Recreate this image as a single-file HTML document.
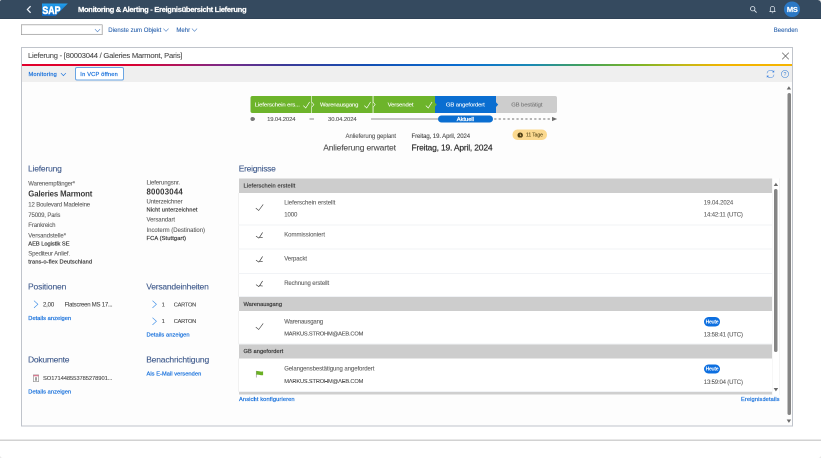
<!DOCTYPE html>
<html lang="de">
<head>
<meta charset="utf-8">
<title>Monitoring &amp; Alerting - Ereignisübersicht Lieferung</title>
<style>
*{box-sizing:border-box;margin:0;padding:0}
h1,h2,h3{font-weight:normal;font-size:inherit}
html,body{width:821px;height:458px;overflow:hidden;background:#e9e9e9}
#vp{position:absolute;left:0;top:0;width:1642px;height:916px;transform:scale(0.5);transform-origin:0 0;will-change:transform;overflow:hidden}
#stage{position:relative;zoom:2;width:821px;height:458px;overflow:hidden;background:#fff;border-radius:1.5px 3px 3px 3px;font-family:"Liberation Sans",sans-serif;color:#333;font-size:6px;line-height:10px}
.abs,.t{position:absolute;white-space:nowrap;display:block}
.t{line-height:10px;height:10px;-webkit-text-stroke:0.1px currentColor}
.t.b{-webkit-text-stroke:0}
.t.hb{-webkit-text-stroke:0.2px #fff}
.t.m{-webkit-text-stroke:0.3px currentColor}
.t.m2{-webkit-text-stroke:0.18px currentColor}
.t.sb{-webkit-text-stroke:0.2px currentColor}
header{position:absolute;left:0;top:0;width:821px;height:19px;background:#354a5f;border-radius:1.5px 3px 0 0;border-bottom:0.7px solid #2b3d4f}
.avatar{left:784.1px;top:1.5px;width:15.8px;height:15.7px;border-radius:50%;background:#2b78c5}
.combo{left:21.1px;top:24.3px;width:81.4px;height:10.8px;border:0.9px solid #8c8c8c;background:#fff;box-shadow:inset 0 0 0 0.6px #e2e2e2}
main{position:absolute;left:21px;top:47px;width:772.2px;height:379.6px;border:1px solid #c0c4cb;background:#fdfdfd}
.ptitle{left:0;top:0;width:770.2px;height:17px;background:#fff}
.cbar{left:0;top:15.9px;width:770.2px;height:2.1px;background:linear-gradient(90deg,#e2002b 0%,#dc0030 14%,#b4145a 20%,#7c2a88 26%,#3c3a98 34%,#1450b4 45%,#0a6ed1 57%,#1b8ab5 66%,#45a25a 73%,#7cb428 80%,#c4b818 86%,#f2b400 91%,#f6b400 100%)}
.ptool{left:0;top:18px;width:770.2px;height:16.2px;background:#efefef}
.btn{left:75px;top:67.1px;width:48.9px;height:13.6px;border:1px solid #6aa5e3;border-radius:2px;background:#fff}
.seg{top:96px;height:17.2px}
.gh{left:239.2px;width:532.7px;background:#cdcdcd}
.row{left:238.7px;width:533.2px;background:#fff;border-left:0.8px solid #e6e6e6;border-bottom:1.2px solid #f1f3f6}
.heute{width:16px;height:9.3px;border-radius:4.65px;background:#0d6fe0}
footer{position:absolute;left:0;top:439.3px;width:821px;height:18.7px;background:#fff;border-top:1.6px solid #d2d2d2;border-radius:0 0 3px 3px}
</style>
</head>
<body>
<div id="vp"><div id="stage">
<header>
  <svg class="abs" style="left:25px;top:5px" width="8" height="9" viewBox="0 0 8 9"><path d="M5.6 1.2 L2.4 4.5 L5.6 7.8" fill="none" stroke="#eef3fa" stroke-width="1.25"/></svg>
  <svg class="abs" style="left:42.1px;top:3.4px" width="27" height="12.8" viewBox="0 0 27 12.8"><defs><linearGradient id="sapg" x1="0" y1="0" x2="0" y2="1"><stop offset="0" stop-color="#22a0ee"/><stop offset="1" stop-color="#0d63bf"/></linearGradient></defs><path d="M0 0H25.8L13.2 12.8H0Z" fill="url(#sapg)"/><text x="0.4" y="10.6" font-family="Liberation Sans, sans-serif" font-weight="bold" font-size="11.2" fill="#fff" stroke="#fff" stroke-width="0.55" textLength="18.2" lengthAdjust="spacingAndGlyphs">SAP</text></svg>
  <h1><span class="t hb b" style="left:78.00px;top:4.63px;font-size:7.6px;letter-spacing:-0.326px;color:#fff;font-weight:bold">Monitoring &amp; Alerting - Ereignisübersicht Lieferung</span></h1>
  <svg class="abs" style="left:749px;top:5px" width="9" height="9" viewBox="0 0 9 9"><circle cx="3.7" cy="3.7" r="2.2" fill="none" stroke="#e8eef5" stroke-width="0.8"/><path d="M5.4 5.4 L7.6 7.6" stroke="#e8eef5" stroke-width="0.9"/></svg>
  <svg class="abs" style="left:768px;top:5px" width="9" height="9" viewBox="0 0 9 9"><path d="M2.3 6.4 V3.8 A2.2 2.4 0 0 1 6.7 3.8 V6.4 M1.4 6.6 H7.6 M3.8 7.8 H5.2" fill="none" stroke="#e8eef5" stroke-width="0.7"/></svg>
  <span class="abs avatar"></span><span class="t hb b" style="left:786.90px;top:4.63px;font-size:7.5px;letter-spacing:-0.325px;color:#fff;font-weight:bold">MS</span>
</header>

<nav>
  <span class="abs combo"></span>
  <svg class="abs" style="left:94.6px;top:27.9px" width="6" height="5" viewBox="0 0 6 5"><path d="M0.4 1.1 L3 3.8 L5.6 1.1" fill="none" stroke="#4a7fc4" stroke-width="0.55"/></svg><span class="t" style="left:108.30px;top:24.97px;font-size:6px;letter-spacing:0.036px;color:#2a62ad">Dienste zum Objekt</span><svg class="abs" style="left:163.1px;top:27.7px" width="6" height="5" viewBox="0 0 6 5"><path d="M0.4 1.1 L3 3.8 L5.6 1.1" fill="none" stroke="#4a7fc4" stroke-width="0.55"/></svg><span class="t" style="left:176.40px;top:24.97px;font-size:6px;letter-spacing:0.007px;color:#2a62ad">Mehr</span><svg class="abs" style="left:191.7px;top:27.7px" width="6" height="5" viewBox="0 0 6 5"><path d="M0.4 1.1 L3 3.8 L5.6 1.1" fill="none" stroke="#4a7fc4" stroke-width="0.55"/></svg><span class="t" style="left:773.80px;top:24.97px;font-size:6px;letter-spacing:0.011px;color:#2a62ad">Beenden</span>
</nav>

<main>
  <span class="abs ptitle"></span>
  <span class="abs cbar"></span>
  <span class="abs ptool"></span>
</main>

<section>
  <h2><span class="t" style="left:28.00px;top:50.63px;font-size:7.6px;letter-spacing:-0.217px;color:#4d4d4d">Lieferung - [80003044 / Galeries Marmont, Paris]</span></h2>
  <svg class="abs" style="left:781px;top:51.6px" width="9" height="9" viewBox="0 0 9 9"><path d="M1.2 1.2 L7.8 7.8 M7.8 1.2 L1.2 7.8" stroke="#444" stroke-width="0.65" fill="none"/></svg>
  <span class="t sb" style="left:28.50px;top:69.02px;font-size:5.7px;letter-spacing:0.191px;color:#1670dc">Monitoring</span><svg class="abs" style="left:60.6px;top:71.9px" width="5.8" height="4.8" viewBox="0 0 6 5"><path d="M0.4 1.1 L3 3.8 L5.6 1.1" fill="none" stroke="#1670dc" stroke-width="0.65"/></svg>
  <span class="abs btn"></span><span class="t sb" style="left:80.30px;top:69.02px;font-size:5.7px;letter-spacing:0.188px;color:#1670dc">In VCP öffnen</span>
  <svg class="abs" style="left:765.5px;top:69px" width="10" height="10" viewBox="0 0 10 10"><path d="M1.5 4.4 A3.6 3.6 0 0 1 8 2.8 M8.5 5.6 A3.6 3.6 0 0 1 2 7.2" fill="none" stroke="#4a8be0" stroke-width="0.55"/><path d="M8.7 1.2 L8.7 3.5 L6.6 3.2 Z M1.3 8.8 L1.3 6.5 L3.4 6.8 Z" fill="#3b82e0"/></svg>
  <svg class="abs" style="left:780.5px;top:69.5px" width="9" height="9" viewBox="0 0 9 9"><circle cx="4.5" cy="4.5" r="3.6" fill="none" stroke="#3b82d6" stroke-width="0.55"/><text x="4.5" y="6.4" text-anchor="middle" font-family="Liberation Sans, sans-serif" font-size="5.2" fill="#3b82d6">?</text></svg>
</section>

<section>
  <span class="abs seg" style="left:250.7px;width:61px;background:#6db42b;border-radius:2px 0 0 2px"></span>
  <span class="abs seg" style="left:312px;width:61px;background:#6db42b"></span>
  <span class="abs seg" style="left:373.3px;width:61.5px;background:#6db42b"></span>
  <span class="abs seg" style="left:434.8px;width:61.4px;background:#0a6ed1"></span>
  <span class="abs seg" style="left:496.2px;width:61px;background:#cdcdcd;border-radius:0 2px 2px 0"></span>
  <svg class="abs" style="left:310px;top:96px" width="190" height="17.2" viewBox="0 0 190 17.2">
    <path d="M1.6 0 V17.2" stroke="#e4f2d6" stroke-width="0.7" fill="none"/>
    <path d="M1.6 6 L3.9 8.6 L1.6 11.2" stroke="#fff" stroke-width="0.6" fill="#6db42b"/>
    <path d="M62.9 0 V17.2" stroke="#e4f2d6" stroke-width="0.7" fill="none"/>
    <path d="M62.9 6 L65.2 8.6 L62.9 11.2" stroke="#fff" stroke-width="0.6" fill="#6db42b"/>
    <path d="M124.6 6.2 L126.8 8.6 L124.6 11 Z" fill="#6db42b"/>
    <path d="M186 6.2 L188.2 8.6 L186 11 Z" fill="#0a6ed1"/>
  </svg>
  <span class="t" style="left:254.70px;top:99.62px;font-size:5.9px;letter-spacing:-0.077px;color:#fff">Lieferschein ers...</span><svg class="abs" style="left:302.9px;top:101.5px" width="6.9" height="7" viewBox="0 0 6.9 7"><path d="M0.3 4.1 L2.76 6.5 L6.6000000000000005 0.4" fill="none" stroke="#fff" stroke-width="0.65"/></svg><span class="t" style="left:320.00px;top:99.62px;font-size:5.9px;letter-spacing:-0.124px;color:#fff">Warenausgang</span><svg class="abs" style="left:364.2px;top:101.5px" width="6.9" height="7" viewBox="0 0 6.9 7"><path d="M0.3 4.1 L2.76 6.5 L6.6000000000000005 0.4" fill="none" stroke="#fff" stroke-width="0.65"/></svg><span class="t" style="left:387.60px;top:99.62px;font-size:5.9px;letter-spacing:-0.086px;color:#fff">Versendet</span><svg class="abs" style="left:425.5px;top:101.5px" width="6.9" height="7" viewBox="0 0 6.9 7"><path d="M0.3 4.1 L2.76 6.5 L6.6000000000000005 0.4" fill="none" stroke="#fff" stroke-width="0.65"/></svg><span class="t" style="left:445.90px;top:99.62px;font-size:5.9px;letter-spacing:-0.110px;color:#fff">GB angefordert</span><span class="t" style="left:511.20px;top:99.62px;font-size:5.9px;letter-spacing:-0.105px;color:#777">GB bestätigt</span>
  <span class="abs" style="left:250.7px;top:117px;width:4px;height:4px;border-radius:50%;background:#777"></span>
  <span class="t" style="left:267.10px;top:114.02px;font-size:5.9px;letter-spacing:-0.122px;color:#555">19.04.2024</span>
  <span class="abs" style="left:309.4px;top:118.7px;width:4.6px;height:0.7px;background:#888"></span>
  <span class="t" style="left:328.00px;top:114.02px;font-size:5.9px;letter-spacing:-0.092px;color:#555">30.04.2024</span>
  <span class="abs" style="left:371.2px;top:118.4px;width:68px;height:1.2px;background:#929292"></span>
  <span class="abs" style="left:438px;top:115.3px;width:54.8px;height:7.2px;border-radius:3.6px;background:#0a6ed1"></span>
  <span class="t m" style="left:456.80px;top:114.02px;font-size:5.8px;letter-spacing:-0.044px;color:#fff">Aktuell</span>
  <svg class="abs" style="left:493px;top:115px" width="66" height="8" viewBox="0 0 66 8"><path d="M1.2 4 H58" stroke="#8c8c8c" stroke-width="1.2" stroke-dasharray="2.2 2.25" fill="none"/><path d="M59 1.9 L64.2 4 L59 6.1 Z" fill="#6e6e6e"/></svg>
  <span class="t" style="left:345.50px;top:131.02px;font-size:6px;letter-spacing:-0.064px;color:#555">Anlieferung geplant</span><span class="t" style="left:411.50px;top:131.02px;font-size:6px;letter-spacing:-0.078px;color:#444">Freitag, 19. April, 2024</span>
  <span class="abs" style="left:512.3px;top:129.6px;width:34.6px;height:10.2px;border-radius:5px;background:#fbd98f"></span>
  <svg class="abs" style="left:517.7px;top:132.3px" width="5.4" height="5.4" viewBox="0 0 10 10"><circle cx="5" cy="5" r="5" fill="#4a3a10"/><path d="M5 2.2 V5.2 L7 6.6" stroke="#fbd98f" stroke-width="1.3" fill="none"/></svg>
  <span class="t" style="left:526.00px;top:130.12px;font-size:5px;letter-spacing:-0.077px;color:#5a4a1a">11 Tage</span><span class="t" style="left:323.20px;top:143.23px;font-size:8.5px;letter-spacing:-0.174px;color:#505050">Anlieferung erwartet</span><span class="t m2" style="left:411.50px;top:143.23px;font-size:8.5px;letter-spacing:-0.193px;color:#2e2e2e">Freitag, 19. April, 2024</span>
</section>

<section>
  <h3><span class="t" style="left:28.00px;top:163.95px;font-size:8.5px;letter-spacing:-0.194px;color:#3f5a8c">Lieferung</span></h3>
  <span class="t" style="left:28.30px;top:178.32px;font-size:6px;letter-spacing:-0.118px;color:#5e5e5e">Warenempfänger*</span><span class="t b" style="left:28.30px;top:188.80px;font-size:7.8px;letter-spacing:-0.123px;color:#3a3a3a;font-weight:bold">Galeries Marmont</span><span class="t" style="left:28.30px;top:199.72px;font-size:6px;letter-spacing:-0.137px;color:#5e5e5e">12 Boulevard Madeleine</span><span class="t" style="left:28.30px;top:209.82px;font-size:6px;letter-spacing:-0.141px;color:#5e5e5e">75009, Paris</span><span class="t" style="left:28.30px;top:219.82px;font-size:6px;letter-spacing:-0.134px;color:#5e5e5e">Frankreich</span><span class="t" style="left:28.30px;top:230.32px;font-size:6px;letter-spacing:-0.047px;color:#5e5e5e">Versandstelle*</span><span class="t sb" style="left:28.30px;top:238.52px;font-size:5.7px;letter-spacing:-0.018px;color:#3a3a3a">AEB Logistik SE</span><span class="t" style="left:28.30px;top:248.72px;font-size:6px;letter-spacing:-0.118px;color:#5e5e5e">Spediteur Anlief.</span><span class="t sb" style="left:28.30px;top:256.62px;font-size:5.7px;letter-spacing:0.090px;color:#3a3a3a">trans-o-flex Deutschland</span><span class="t" style="left:146.50px;top:177.32px;font-size:6px;letter-spacing:-0.092px;color:#5e5e5e">Lieferungsnr.</span><span class="t b" style="left:146.50px;top:186.80px;font-size:7.8px;letter-spacing:0.226px;color:#3a3a3a;font-weight:bold">80003044</span><span class="t" style="left:146.50px;top:196.32px;font-size:6px;letter-spacing:-0.104px;color:#5e5e5e">Unterzeichner</span><span class="t sb" style="left:146.50px;top:204.62px;font-size:5.7px;letter-spacing:0.123px;color:#3a3a3a">Nicht unterzeichnet</span><span class="t" style="left:146.50px;top:214.42px;font-size:6px;letter-spacing:-0.052px;color:#5e5e5e">Versandart</span><span class="t" style="left:146.50px;top:224.92px;font-size:6px;letter-spacing:-0.024px;color:#5e5e5e">Incoterm (Destination)</span><span class="t sb" style="left:146.50px;top:233.22px;font-size:5.7px;letter-spacing:0.114px;color:#3a3a3a">FCA (Stuttgart)</span>
</section>

<section>
  <h3><span class="t" style="left:28.00px;top:281.93px;font-size:8.5px;letter-spacing:-0.150px;color:#3f5a8c">Positionen</span></h3>
  <svg class="abs" style="left:33px;top:300px" width="6" height="8.6" viewBox="0 0 6 8.6"><path d="M1 0.7 L4.9 4.3 L1 7.9" fill="none" stroke="#2f86e6" stroke-width="0.6"/></svg><span class="t" style="left:43.00px;top:299.32px;font-size:6px;letter-spacing:-0.170px;color:#484848">2,00</span><span class="t" style="left:64.60px;top:299.32px;font-size:6px;letter-spacing:-0.228px;color:#484848">Flatscreen MS 17...</span><span class="t sb" style="left:28.30px;top:313.02px;font-size:5.7px;letter-spacing:0.049px;color:#1670dc">Details anzeigen</span>
  <h3><span class="t" style="left:146.20px;top:281.93px;font-size:8.5px;letter-spacing:-0.206px;color:#3f5a8c">Versandeinheiten</span></h3>
  <svg class="abs" style="left:151.3px;top:300px" width="6" height="8.6" viewBox="0 0 6 8.6"><path d="M1 0.7 L4.9 4.3 L1 7.9" fill="none" stroke="#2f86e6" stroke-width="0.6"/></svg><span class="t" style="left:161.60px;top:299.32px;font-size:5.8px;letter-spacing:-0.627px;color:#484848">1</span><span class="t" style="left:173.80px;top:299.32px;font-size:5.7px;letter-spacing:-0.274px;color:#484848">CARTON</span><svg class="abs" style="left:151.3px;top:316.8px" width="6" height="8.6" viewBox="0 0 6 8.6"><path d="M1 0.7 L4.9 4.3 L1 7.9" fill="none" stroke="#2f86e6" stroke-width="0.6"/></svg><span class="t" style="left:161.60px;top:316.12px;font-size:5.8px;letter-spacing:-0.627px;color:#484848">1</span><span class="t" style="left:173.80px;top:316.12px;font-size:5.7px;letter-spacing:-0.274px;color:#484848">CARTON</span><span class="t sb" style="left:146.50px;top:329.52px;font-size:5.7px;letter-spacing:0.062px;color:#1670dc">Details anzeigen</span>
  <h3><span class="t" style="left:28.00px;top:355.23px;font-size:8.5px;letter-spacing:-0.252px;color:#3f5a8c">Dokumente</span></h3>
  <svg class="abs" style="left:33.2px;top:374.3px" width="6" height="7.4" viewBox="0 0 6 7.4"><rect x="0.4" y="0.4" width="5.2" height="6.6" fill="#fff" stroke="#888" stroke-width="0.6"/><rect x="0.4" y="0.4" width="5.2" height="1.4" fill="#dc7a92"/><rect x="2.2" y="2.7" width="1.6" height="3.5" fill="#8a8a8a"/></svg>
  <span class="t" style="left:43.00px;top:373.02px;font-size:5.8px;letter-spacing:-0.084px;color:#484848">SO171448553785278901...</span><span class="t sb" style="left:28.30px;top:386.52px;font-size:5.7px;letter-spacing:0.049px;color:#1670dc">Details anzeigen</span>
  <h3><span class="t" style="left:146.20px;top:355.23px;font-size:8.5px;letter-spacing:-0.180px;color:#3f5a8c">Benachrichtigung</span></h3>
  <span class="t sb" style="left:146.50px;top:368.52px;font-size:5.7px;letter-spacing:0.049px;color:#1670dc">Als E-Mail versenden</span>
</section>

<section>
  <h3><span class="t" style="left:238.70px;top:163.93px;font-size:8.5px;letter-spacing:-0.279px;color:#3f5a8c">Ereignisse</span></h3>
  <span class="abs gh" style="top:178.6px;height:14.3px"></span>
  <span class="abs row" style="top:192.9px;height:32.4px"></span>
  <span class="abs row" style="top:225.3px;height:24.3px"></span>
  <span class="abs row" style="top:249.6px;height:24.2px"></span>
  <span class="abs row" style="top:273.8px;height:23.4px"></span>
  <span class="abs gh" style="top:297px;height:13.8px"></span>
  <span class="abs row" style="top:310.8px;height:33.5px"></span>
  <span class="abs gh" style="top:344.4px;height:14.1px"></span>
  <span class="abs row" style="top:358.5px;height:33.7px"></span>
  <span class="abs" style="left:239.2px;top:392.1px;width:532.8px;height:2.6px;background:#cfcfcf"></span>
  <span class="t sb" style="left:243.50px;top:180.62px;font-size:5.7px;letter-spacing:0.130px;color:#3a3a3a">Lieferschein erstellt</span><svg class="abs" style="left:255.6px;top:204.1px" width="8" height="7" viewBox="0 0 8 7"><path d="M0.3 4.1 L3.2 6.5 L7.7 0.4" fill="none" stroke="#3a3a3a" stroke-width="0.6"/></svg><span class="t" style="left:284.20px;top:197.62px;font-size:6px;letter-spacing:-0.028px;color:#5e5e5e">Lieferschein erstellt</span><span class="t" style="left:284.20px;top:209.72px;font-size:6px;letter-spacing:-0.063px;color:#5e5e5e">1000</span><span class="t" style="left:703.80px;top:197.32px;font-size:6px;letter-spacing:-0.063px;color:#5e5e5e">19.04.2024</span><span class="t" style="left:703.80px;top:209.52px;font-size:6px;letter-spacing:-0.136px;color:#5e5e5e">14:42:11 (UTC)</span><svg class="abs" style="left:255.6px;top:232px" width="8" height="7" viewBox="0 0 8 7"><path d="M0.5 4.1 L3.3 6.1 L4.2 5 L7.1 0.4 M4.4 5.15 L7.2 5.6" fill="none" stroke="#333" stroke-width="0.65"/></svg><span class="t" style="left:284.20px;top:229.72px;font-size:6px;letter-spacing:-0.015px;color:#5e5e5e">Kommissioniert</span><svg class="abs" style="left:255.6px;top:256.2px" width="8" height="7" viewBox="0 0 8 7"><path d="M0.5 4.1 L3.3 6.1 L4.2 5 L7.1 0.4 M4.4 5.15 L7.2 5.6" fill="none" stroke="#333" stroke-width="0.65"/></svg><span class="t" style="left:284.20px;top:253.72px;font-size:6px;letter-spacing:-0.069px;color:#5e5e5e">Verpackt</span><svg class="abs" style="left:255.6px;top:280.3px" width="8" height="7" viewBox="0 0 8 7"><path d="M0.5 4.1 L3.3 6.1 L4.2 5 L7.1 0.4 M4.4 5.15 L7.2 5.6" fill="none" stroke="#333" stroke-width="0.65"/></svg><span class="t" style="left:284.20px;top:278.12px;font-size:6px;letter-spacing:-0.106px;color:#5e5e5e">Rechnung erstellt</span><span class="t sb" style="left:243.50px;top:299.02px;font-size:5.7px;letter-spacing:0.007px;color:#3a3a3a">Warenausgang</span><svg class="abs" style="left:255.6px;top:323px" width="8" height="7" viewBox="0 0 8 7"><path d="M0.3 4.1 L3.2 6.5 L7.7 0.4" fill="none" stroke="#3a3a3a" stroke-width="0.6"/></svg><span class="t" style="left:284.20px;top:316.42px;font-size:6px;letter-spacing:-0.140px;color:#5e5e5e">Warenausgang</span><span class="t" style="left:284.20px;top:328.52px;font-size:5.7px;letter-spacing:-0.175px;color:#505050">MARKUS.STROHM@AEB.COM</span><span class="abs heute" style="left:703.9px;top:317.2px"></span><span class="t b" style="left:705.60px;top:316.97px;font-size:5.1px;letter-spacing:-0.291px;color:#fff;font-weight:bold">Heute</span><span class="t" style="left:703.80px;top:329.72px;font-size:6px;letter-spacing:-0.168px;color:#5e5e5e">13:58:41 (UTC)</span><span class="t sb" style="left:243.50px;top:346.12px;font-size:5.7px;letter-spacing:0.061px;color:#3a3a3a">GB angefordert</span>
  <svg class="abs" style="left:255.6px;top:370.4px" width="8" height="7.2" viewBox="0 0 8 7.2"><path d="M0.8 0.3 V7" stroke="#9a9a9a" stroke-width="0.7"/><path d="M0.9 0.6 C2.6 0 4.6 1.6 7.6 0.9 V4.6 C4.8 5.3 2.6 3.6 0.9 4.4 Z" fill="#6ab023"/></svg>
  <span class="t" style="left:284.20px;top:363.52px;font-size:6px;letter-spacing:-0.072px;color:#5e5e5e">Gelangensbestätigung angefordert</span><span class="t" style="left:284.20px;top:376.02px;font-size:5.7px;letter-spacing:-0.175px;color:#505050">MARKUS.STROHM@AEB.COM</span><span class="abs heute" style="left:703.9px;top:364.3px"></span><span class="t b" style="left:705.60px;top:364.07px;font-size:5.1px;letter-spacing:-0.291px;color:#fff;font-weight:bold">Heute</span><span class="t" style="left:703.80px;top:376.82px;font-size:6px;letter-spacing:-0.168px;color:#5e5e5e">13:59:04 (UTC)</span><span class="t sb" style="left:239.00px;top:393.92px;font-size:5.7px;letter-spacing:0.120px;color:#1670dc">Ansicht konfigurieren</span><span class="t sb" style="left:741.00px;top:393.92px;font-size:5.7px;letter-spacing:0.104px;color:#1670dc">Ereignisdetails</span>
  <span class="abs" style="left:772px;top:178.7px;width:7.6px;height:216.4px;background:#fff;border-left:0.6px solid #efefef;border-right:0.8px solid #ececec"></span>
  <svg class="abs" style="left:773.3px;top:182.5px" width="4.8" height="3.6" viewBox="0 0 4 3.2"><path d="M0 3.2 L2 0.2 L4 3.2 Z" fill="#6a6a6a"/></svg>
  <span class="abs" style="left:773.9px;top:189.1px;width:3.6px;height:163px;border-radius:1.8px;background:#858585"></span>
  <svg class="abs" style="left:773.3px;top:388.1px" width="4.8" height="3.6" viewBox="0 0 4 3.2"><path d="M0 0 L2 3 L4 0 Z" fill="#6a6a6a"/></svg>
</section>

<aside>
  <svg class="abs" style="left:786.7px;top:85.9px" width="4.8" height="3.6" viewBox="0 0 4 3.2"><path d="M0 3.2 L2 0.2 L4 3.2 Z" fill="#6a6a6a"/></svg>
  <span class="abs" style="left:787.3px;top:92.8px;width:3.6px;height:322px;border-radius:1.8px;background:#858585"></span>
  <svg class="abs" style="left:786.7px;top:419.3px" width="4.8" height="3.6" viewBox="0 0 4 3.2"><path d="M0 0 L2 3 L4 0 Z" fill="#6a6a6a"/></svg>
</aside>

<footer></footer>
</div></div>
</body>
</html>
